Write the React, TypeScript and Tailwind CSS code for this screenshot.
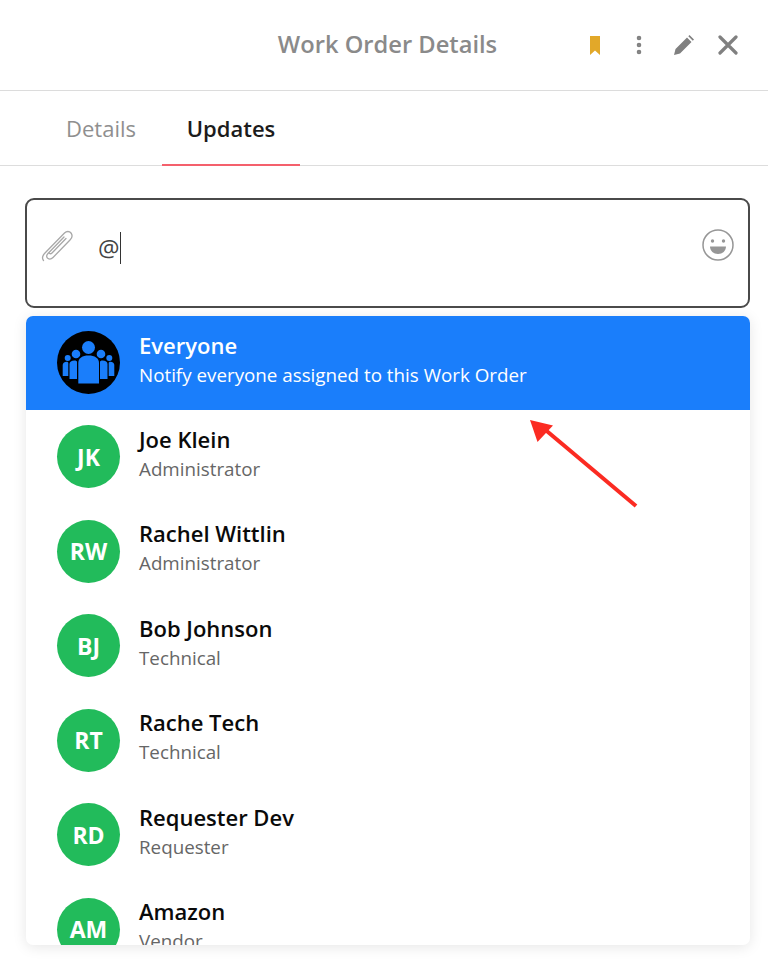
import React from 'react';
import { EllipsisVertical } from 'lucide-react';

const PEOPLE = [
  { initials: 'JK', name: 'Joe Klein', role: 'Administrator' },
  { initials: 'RW', name: 'Rachel Wittlin', role: 'Administrator' },
  { initials: 'BJ', name: 'Bob Johnson', role: 'Technical' },
  { initials: 'RT', name: 'Rache Tech', role: 'Technical' },
  { initials: 'RD', name: 'Requester Dev', role: 'Requester' },
  { initials: 'AM', name: 'Amazon', role: 'Vendor' },
];

function GroupIcon() {
  return (
    <svg viewBox="0 0 63 63" className="w-[63px] h-[63px] shrink-0">
      <circle cx="31.5" cy="31.5" r="31.5" fill="#000" />
      <g fill="#1a7efb">
        <circle cx="31.5" cy="16.5" r="6.5" />
        <circle cx="19" cy="23" r="4.3" />
        <circle cx="44" cy="23" r="4.3" />
        <circle cx="10.7" cy="27" r="3" />
        <circle cx="52.3" cy="27" r="3" />
        <path d="M21.300 52.500V32c0-5 4-7.500 10.200-7.500S42 27 42 32v20.500z" />
        <path d="M12.500 48V33c0-2 2-3.500 5-3.500 1.500 0 2.500 .5 2.500 1.500v17z" />
        <path d="M50.500 48V33c0-2-2-3.500-5-3.500-1.500 0-2.500 .5-2.500 1.500v17z" />
        <path d="M5.700 45V34c0-2 1.500-3.300 4-3.300 1 0 1.600 .5 1.600 1.500V45z" />
        <path d="M57.300 45V34c0-2-1.500-3.300-4-3.300-1 0-1.600 .5-1.600 1.500V45z" />
      </g>
    </svg>
  );
}

export default function App() {
  return (
    <div className="relative w-[768px] h-[959px] overflow-hidden bg-white font-['Open_Sans',sans-serif]">
      <header className="relative flex items-center justify-center h-[91px] border-b border-[#dcdcdc]">
        <h1 className="ml-[7px] text-[23.7px] font-semibold text-[#8a8a8a] -mt-[1px]">Work Order Details</h1>
        <div className="absolute right-[30px] top-[33px] flex items-center">
          <svg viewBox="0 0 10 19" className="w-[10px] h-[19px] mr-[28px]">
            <path d="M0 0h10v19L5 14.500 0 19z" fill="#e2a829" />
          </svg>
          <EllipsisVertical size={24} strokeWidth={2.6} className="text-[#808080] mr-[23px] -ml-[1px]" />
          <svg viewBox="0 0 20 20" className="w-[20px] h-[20px] mr-[24px]">
            <path d="M0 20l1.500-6L13 2.500l4.500 4.500L6 18.500zM14.300 1.200 15.500 0 20 4.500 18.800 5.700z" fill="#808080" />
          </svg>
          <svg viewBox="0 0 20 20" className="w-[20px] h-[20px]">
            <path d="M2 2l16 16M18 2L2 18" stroke="#808080" strokeWidth="3.200" strokeLinecap="round" />
          </svg>
        </div>
      </header>

      <nav className="flex h-[75px] border-b border-[#dddddd] pl-[40px]">
        <div className="w-[122px] flex justify-center pt-[20px] text-[22px] leading-[34px] text-[#8f8f8f]">Details</div>
        <div className="w-[138px] flex justify-center pt-[20px] text-[22px] leading-[34px] font-semibold text-[#1c1c1c] border-b-2 border-[#f4606c] -mb-px">Updates</div>
      </nav>

      <div className="relative flex mt-[32px] mx-[25px] w-[725px] h-[110px] rounded-[9px] border-2 border-[#4a4a4a] bg-white">
        <svg viewBox="0 0 32 34" className="absolute left-[14px] top-[29px] w-[32px] h-[34px]" fill="none" stroke="#a8a8a8" strokeWidth="1.300" strokeLinecap="round">
          <path d="M23 8 7 24.500c-2 2-1.500 4 0 5s3 1 5-1L29 11c2.500-2.500 2.500-5 1-7s-4.500-2-6.500 0L4 24c-3 3-3 5.500-1.500 7.500" />
          <path d="M25 9.500 11 24c-1 1-2.500 1-3 0" />
        </svg>
        <div className="ml-[71px] mt-[31px] flex items-center h-[34px] text-[24px] text-[#444444]">
          @<span className="w-[1.500px] h-[32px] bg-[#333333]" />
        </div>
        <svg viewBox="0 0 32 32" className="absolute right-[14px] top-[29px] w-[32px] h-[32px]">
          <circle cx="16" cy="16" r="15" fill="none" stroke="#969696" strokeWidth="1.500" />
          <circle cx="10.500" cy="12" r="1.700" fill="#969696" />
          <circle cx="21.500" cy="12" r="1.700" fill="#969696" />
          <path d="M8 17.500h16c0 4.500-3.500 7.500-8 7.500s-8-3-8-7.500z" fill="#969696" />
        </svg>
      </div>

      <div className="ml-[26px] mt-[8px] w-[724px] h-[629px] overflow-hidden rounded-[7px] bg-white shadow-[0_2px_14px_rgba(0,0,0,0.10)]">
        <div className="flex items-center h-[93.5px] pl-[31px] bg-[#1a7efb]">
          <GroupIcon />
          <div className="ml-[19px] -mt-[6px]">
            <div className="text-[22px] leading-[30px] font-semibold text-white">Everyone</div>
            <div className="mt-px text-[18.800px] leading-[28px] text-white">Notify everyone assigned to this Work Order</div>
          </div>
        </div>
        {PEOPLE.map((person) => (
          <div key={person.initials} className="flex items-center h-[94.5px] shrink-0 pl-[31px]">
            <div className="flex items-center justify-center w-[63px] h-[63px] shrink-0 rounded-full bg-[#22bb5b] text-[23px] font-bold text-white">
              {person.initials}
            </div>
            <div className="ml-[19px] -mt-[7px]">
              <div className="text-[22px] leading-[30px] font-semibold text-[#0a0a0a]">{person.name}</div>
              <div className="mt-px text-[18.800px] leading-[28px] text-[#666666]">{person.role}</div>
            </div>
          </div>
        ))}
      </div>

      {/* annotation arrow */}
      <svg viewBox="0 0 110 90" className="absolute left-[530px] top-[420px] w-[110px] h-[90px]">
        <path d="M106 86 12 7" stroke="#fb2b22" strokeWidth="4" />
        <path d="M0 0 23 5.500 7.500 22z" fill="#fb2b22" />
      </svg>
    </div>
  );
}
